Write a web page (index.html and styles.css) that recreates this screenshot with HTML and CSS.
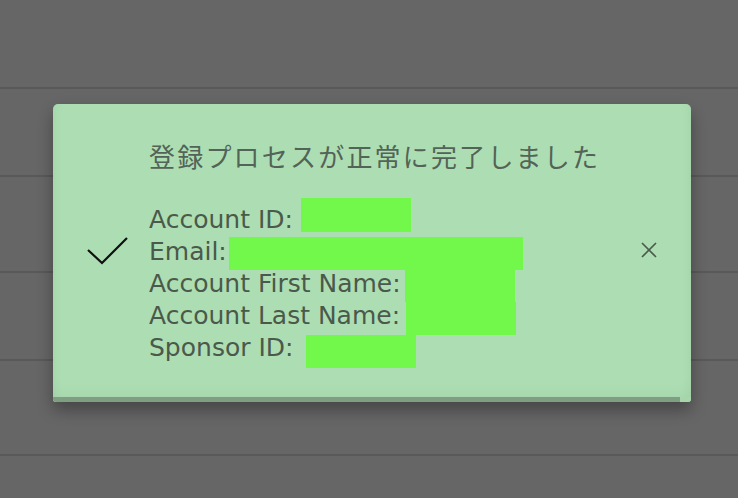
FILE: index.html
```html
<!DOCTYPE html>
<html lang="ja">
<head>
<meta charset="utf-8">
<title>登録完了</title>
<link rel="stylesheet" href="styles.css">
</head>
<body>
<div class="page">
  <div class="row r1"></div>
  <div class="row r2"></div>
  <div class="row r3"></div>
  <div class="row r4"></div>
  <div class="row r5"></div>
</div>
<div class="toast" role="alert">
  <div class="toast-main">
    <svg class="check" width="42" height="30" viewBox="0 0 42 30" aria-hidden="true">
      <polyline points="1,13 15,26 40,1" fill="none" stroke="#111" stroke-width="2.2"/>
    </svg>
    <div class="msg">
      <div class="title">登録プロセスが正常に完了しました</div>
      <div class="blank">&nbsp;</div>
      <div class="line">Account ID: <span class="red r-acc"></span></div>
      <div class="line">Email:<span class="red r-mail"></span></div>
      <div class="line">Account First Name: <span class="red r-first"></span></div>
      <div class="line">Account Last Name: <span class="red r-last"></span></div>
      <div class="line">Sponsor ID: <span class="red r-sp"></span></div>
    </div>
    <svg class="close" width="16" height="16" viewBox="0 0 16 16" aria-label="閉じる">
      <path d="M1 1 L15 15 M15 1 L1 15" stroke="#4b5b4c" stroke-width="1.7" fill="none"/>
    </svg>
  </div>
  <div class="toast-bar"><div class="bar-fill"></div></div>
</div>
</body>
</html>
```

FILE: styles.css
```css
html, body {
  margin: 0;
  padding: 0;
  background: #666666;
  width: 738px;
  height: 498px;
  overflow: hidden;
}
.page {
  display: flex;
  flex-direction: column;
}
.row {
  border-bottom: 2px solid #595959;
}
.r1 { height: 87px; }
.r2 { height: 86px; }
.r3 { height: 94px; }
.r4 { height: 86px; }
.r5 { height: 93px; }

.toast {
  position: absolute;
  left: 53px;
  top: 104px;
  width: 638px;
  height: 298px;
  background: #addeb3;
  border-radius: 5px 5px 3px 3px;
  box-shadow: 0 8px 16px rgba(0, 0, 0, 0.32), inset 0 -14px 18px -10px rgba(0, 0, 0, 0.06), inset 10px 0 12px -10px rgba(0,0,0,0.05), inset -10px 0 12px -10px rgba(0,0,0,0.05);
  display: flex;
  flex-direction: column;
  overflow: hidden;
}
.toast-main {
  flex: 1;
  display: flex;
  align-items: center;
  padding: 0 34px 0 34px;
}
.check {
  flex: none;
  margin-top: 2px;
  margin-right: 20px;
}
.msg {
  flex: 1;
  font-family: "DejaVu Sans", Verdana, sans-serif;
  font-size: 25px;
  line-height: 32px;
  color: #4a594b;
  margin-top: 2px;
}
.title {
  font-family: "Noto Sans CJK JP", sans-serif;
  font-size: 26px;
  letter-spacing: 2.2px;
  color: #536357;
}
.red {
  display: inline-block;
  background: #72f74b;
  vertical-align: baseline;
}
.r-acc { width: 110px; height: 34px; margin-bottom: -4px; margin-top: -12px; }
.r-mail { width: 294px; height: 33px; margin-bottom: -10px; margin-top: -10px; margin-left: 2px; }
.r-first { width: 110px; height: 32px; margin-bottom: -10px; margin-top: -10px; margin-left: -4px; }
.r-last { width: 110px; height: 33px; margin-bottom: -11px; margin-top: -10px; margin-left: -2px; }
.r-sp { width: 110px; height: 33px; margin-bottom: -12px; margin-top: -10px; margin-left: 5px; }
.close {
  flex: none;
  margin-top: -2px;
}
.toast-bar {
  height: 5px;
  background: #a6d6a9;
}
.bar-fill {
  width: 627px;
  height: 100%;
  background: #809f82;
}
```
